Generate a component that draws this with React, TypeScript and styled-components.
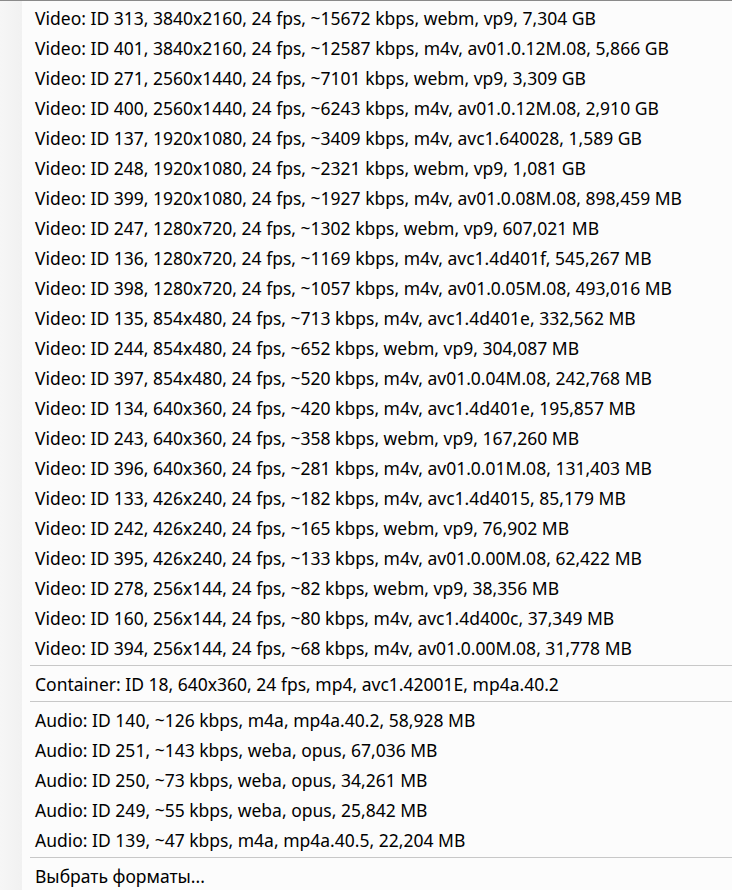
import styled, { createGlobalStyle } from 'styled-components'

const GlobalStyle = createGlobalStyle`
  html, body {
    margin: 0;
    padding: 0;
    background: #fcfcfc;
  }
  body {
    font-family: "Noto Sans", "Open Sans", "DejaVu Sans", sans-serif;
  }
`

const Frame = styled.div`
  display: flex;
  width: 732px;
  height: 890px;
  overflow: hidden;
  border-top: 1px solid #8a8a8a;
  box-sizing: border-box;
`

const Shade = styled.div`
  width: 22px;
  flex-shrink: 0;
  background: linear-gradient(to right, #f6f6f6, #f1f1f1);
`

const Menu = styled.ul`
  flex: 1;
  margin: 0;
  padding: 2px 0 0;
  list-style: none;
  background: #fcfcfc;
`

const Item = styled.li`
  height: 30px;
  line-height: 30px;
  padding-left: 13px;
  font-size: 17.5px;
  color: #000;
  white-space: nowrap;
`

const Separator = styled.li`
  height: 1px;
  margin: 2px 0 3px 8px;
  background: #c8c8c8;
`

const video = [
  'Video: ID 313, 3840x2160, 24 fps, ~15672 kbps, webm, vp9, 7,304 GB',
  'Video: ID 401, 3840x2160, 24 fps, ~12587 kbps, m4v, av01.0.12M.08, 5,866 GB',
  'Video: ID 271, 2560x1440, 24 fps, ~7101 kbps, webm, vp9, 3,309 GB',
  'Video: ID 400, 2560x1440, 24 fps, ~6243 kbps, m4v, av01.0.12M.08, 2,910 GB',
  'Video: ID 137, 1920x1080, 24 fps, ~3409 kbps, m4v, avc1.640028, 1,589 GB',
  'Video: ID 248, 1920x1080, 24 fps, ~2321 kbps, webm, vp9, 1,081 GB',
  'Video: ID 399, 1920x1080, 24 fps, ~1927 kbps, m4v, av01.0.08M.08, 898,459 MB',
  'Video: ID 247, 1280x720, 24 fps, ~1302 kbps, webm, vp9, 607,021 MB',
  'Video: ID 136, 1280x720, 24 fps, ~1169 kbps, m4v, avc1.4d401f, 545,267 MB',
  'Video: ID 398, 1280x720, 24 fps, ~1057 kbps, m4v, av01.0.05M.08, 493,016 MB',
  'Video: ID 135, 854x480, 24 fps, ~713 kbps, m4v, avc1.4d401e, 332,562 MB',
  'Video: ID 244, 854x480, 24 fps, ~652 kbps, webm, vp9, 304,087 MB',
  'Video: ID 397, 854x480, 24 fps, ~520 kbps, m4v, av01.0.04M.08, 242,768 MB',
  'Video: ID 134, 640x360, 24 fps, ~420 kbps, m4v, avc1.4d401e, 195,857 MB',
  'Video: ID 243, 640x360, 24 fps, ~358 kbps, webm, vp9, 167,260 MB',
  'Video: ID 396, 640x360, 24 fps, ~281 kbps, m4v, av01.0.01M.08, 131,403 MB',
  'Video: ID 133, 426x240, 24 fps, ~182 kbps, m4v, avc1.4d4015, 85,179 MB',
  'Video: ID 242, 426x240, 24 fps, ~165 kbps, webm, vp9, 76,902 MB',
  'Video: ID 395, 426x240, 24 fps, ~133 kbps, m4v, av01.0.00M.08, 62,422 MB',
  'Video: ID 278, 256x144, 24 fps, ~82 kbps, webm, vp9, 38,356 MB',
  'Video: ID 160, 256x144, 24 fps, ~80 kbps, m4v, avc1.4d400c, 37,349 MB',
  'Video: ID 394, 256x144, 24 fps, ~68 kbps, m4v, av01.0.00M.08, 31,778 MB',
]

const audio = [
  'Audio: ID 140, ~126 kbps, m4a, mp4a.40.2, 58,928 MB',
  'Audio: ID 251, ~143 kbps, weba, opus, 67,036 MB',
  'Audio: ID 250, ~73 kbps, weba, opus, 34,261 MB',
  'Audio: ID 249, ~55 kbps, weba, opus, 25,842 MB',
  'Audio: ID 139, ~47 kbps, m4a, mp4a.40.5, 22,204 MB',
]

export default function App() {
  return (
    <>
      <GlobalStyle />
      <Frame>
        <Shade />
        <Menu>
          {video.map((v) => (
            <Item key={v}>{v}</Item>
          ))}
          <Separator />
          <Item>Container: ID 18, 640x360, 24 fps, mp4, avc1.42001E, mp4a.40.2</Item>
          <Separator />
          {audio.map((a) => (
            <Item key={a}>{a}</Item>
          ))}
          <Separator />
          <Item>Выбрать форматы...</Item>
        </Menu>
      </Frame>
    </>
  )
}
